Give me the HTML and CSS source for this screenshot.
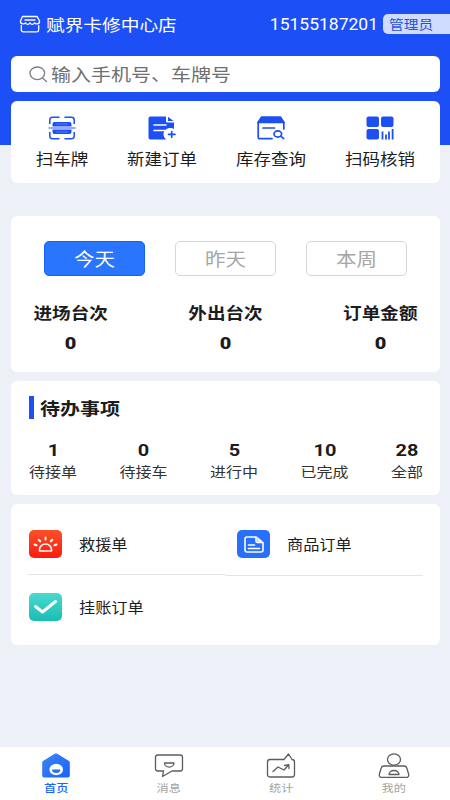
FILE: index.html
```html
<!DOCTYPE html>
<html lang="zh-CN">
<head>
<meta charset="utf-8">
<meta name="viewport" content="width=device-width, initial-scale=1">
<title>赋界卡修中心店</title>
<link rel="stylesheet" href="styles.css">
</head>
<body>
<div class="app">
  <header class="hero">
    <div class="topbar">
      <svg class="shop" width="22" height="18" viewBox="0 0 22 18" fill="none" stroke="#fff" stroke-width="1.3" stroke-linejoin="round" stroke-linecap="round"><path d="M3.800 1.500h13.400q1 0 1.500 1L20.500 6c.5 2.800-3.400 3.800-5 1.900-1.300 2-3.300 2-4.500 0-1.200 2-3.200 2-4.500 0C4.900 9.800 1 8.800 1.500 6L3 2.500q.3-1 .8-1zM6 5h10M2.300 10.500v4.500q0 1.800 1.800 1.800h13.800q1.800 0 1.800-1.800v-4.500"/></svg>
      <h1 class="shop-name"><span class="t">赋界卡修中心店</span></h1>
      <span class="phone">15155187201</span>
      <span class="role"><span class="t">管理员</span></span>
    </div>
    <div class="search">
      <svg width="19" height="17" viewBox="0 0 19 17" fill="none" stroke="#7c7f86" stroke-width="1.3" stroke-linecap="round"><ellipse cx="8.300" cy="7.300" rx="7.300" ry="6.300"/><path d="M13.500 12l4 3.500"/></svg>
      <span class="t">输入手机号、车牌号</span>
    </div>
  </header>

  <nav class="card actions">
    <a class="action">
      <svg width="28" height="24" viewBox="0 0 28 24" fill="none" stroke="#1d4ff4" stroke-width="1.500"><path d="M1.800 8V4q0-2.700 2.700-2.700h7M16.500 1.300h7q2.700 0 2.700 2.700v4M1.800 16v4q0 2.700 2.700 2.700h7M16.500 22.700h7q2.700 0 2.700-2.700v-4"/><path d="M.5 12h27" stroke="#6f8df8"/><path fill="#1d4ff4" stroke="none" d="M6.500 6h15q2 0 2 2v2.500h-19V8q0-2 2-2zM4.500 13.500h19V16q0 2-2 2h-15q-2 0-2-2z"/><path d="M8 8h12M8 16h12" stroke="#5b7df8" stroke-width="1"/></svg>
      <span class="t">扫车牌</span>
    </a>
    <a class="action">
      <svg class="new-order" width="28" height="24" viewBox="0 0 28 24"><path fill="#1d4ff4" d="M2.500.5H18V5q0 1.500 1.500 1.500H26V13a6.500 6 0 0 0-7.500 10.500h-16Q.5 23.500.5 21.500v-19q0-2 2-2zM20 .8L25.500 5H20z"/><path stroke="#fff" stroke-width="1.600" stroke-linecap="round" d="M6 9h12M6 14.500h11"/><path stroke="#1d4ff4" stroke-width="1.700" stroke-linecap="round" d="M20.500 18.300h6.500M23.700 15.500v5.700"/></svg>
      <span class="t">新建订单</span>
    </a>
    <a class="action">
      <svg width="28" height="24" viewBox="0 0 28 24" fill="none" stroke="#1d4ff4" stroke-width="1.700" stroke-linecap="round" stroke-linejoin="round"><path fill="#1d4ff4" d="M4.500 1.200h19L27 6.500H1z"/><path d="M1.200 6.500V21q0 1.700 1.700 1.700H15M26.800 6.500V13M6 12h11.500"/><ellipse cx="20.800" cy="18" rx="3.800" ry="3.100"/><path d="M23.700 20.200l3 2.500"/></svg>
      <span class="t">库存查询</span>
    </a>
    <a class="action">
      <svg width="28" height="24" viewBox="0 0 28 24" fill="#1d4ff4"><rect x=".5" y=".5" width="12.500" height="10.500" rx="2"/><rect x="15" y=".5" width="12.500" height="10.500" rx="2"/><rect x=".5" y="13" width="12.500" height="10.500" rx="2"/><path stroke="#1d4ff4" stroke-width="1.800" d="M16.500 15.500v8M20 18.500v5M23 15.500v8M26.600 13v10.500"/></svg>
      <span class="t">扫码核销</span>
    </a>
  </nav>

  <section class="card stats">
    <div class="periods">
      <button class="period active"><span class="t">今天</span></button>
      <button class="period"><span class="t">昨天</span></button>
      <button class="period"><span class="t">本周</span></button>
    </div>
    <div class="totals">
      <div class="total"><span class="t">进场台次</span><b class="num">0</b></div>
      <div class="total"><span class="t">外出台次</span><b class="num">0</b></div>
      <div class="total"><span class="t">订单金额</span><b class="num">0</b></div>
    </div>
  </section>

  <section class="card todo">
    <h2 class="todo-title"><span class="t">待办事项</span></h2>
    <div class="todo-row">
      <div class="todo-item"><b class="num">1</b><span class="t">待接单</span></div>
      <div class="todo-item"><b class="num">0</b><span class="t">待接车</span></div>
      <div class="todo-item"><b class="num">5</b><span class="t">进行中</span></div>
      <div class="todo-item"><b class="num">10</b><span class="t">已完成</span></div>
      <div class="todo-item"><b class="num">28</b><span class="t">全部</span></div>
    </div>
  </section>

  <section class="card links">
    <a class="link lined">
      <span class="tile red"><svg width="25" height="20" viewBox="0 0 25 20" fill="none" stroke="#fff" stroke-width="1.600" stroke-linecap="round"><path stroke-linejoin="round" d="M6.500 17v-1.500a6 5.500 0 0 1 12 0V17z"/><path d="M1.500 10.500l2 .8M5.700 5.800l1.500 1.500M12.500 3.500v2M19.300 5.800l-1.500 1.500M23.500 10.500l-2 .8" stroke-width="2"/></svg></span>
      <span class="t">救援单</span>
    </a>
    <a class="link lined second">
      <span class="tile blue"><svg width="20" height="17" viewBox="0 0 20 17" fill="none" stroke="#fff" stroke-width="1.600" stroke-linejoin="round" stroke-linecap="round"><path d="M12 1H3Q1 1 1 3v11q0 2 2 2h14q2 0 2-2V6.500h-5.500Q12 6.500 12 5z"/><path d="M13 1l5.500 4.500H14z" fill="#fff" stroke-width=".6"/><path d="M4.500 9h6M4.500 12.500h11"/></svg></span>
      <span class="t">商品订单</span>
    </a>
    <a class="link">
      <span class="tile teal"><svg width="25" height="16" viewBox="0 0 25 16" fill="none" stroke="#fff" stroke-width="3" stroke-linecap="round" stroke-linejoin="round"><path d="M2.500 7.500l7 5.500 13-10.500"/></svg></span>
      <span class="t">挂账订单</span>
    </a>
  </section>

  <footer class="tabbar">
    <a class="tab on">
      <svg width="30" height="25" viewBox="0 0 30 25"><defs><linearGradient id="home" x1="0" y1="0" x2="1" y2="1"><stop offset="0" stop-color="#3d85f8"/><stop offset="1" stop-color="#1a62f7"/></linearGradient></defs><path fill="url(#home)" d="M13.700.8q1.300-.8 2.600 0L28 8q.8.600.8 1.500v13q0 2-2 2H3.200q-2 0-2-2v-13Q1.200 8.600 2 8z"/><ellipse cx="15.200" cy="16.500" rx="6.800" ry="5.800" fill="#fff"/><path d="M11 16.500h8.400a4.200 3.400 0 0 1-8.400 0z" fill="#2a6df7"/></svg>
      <span class="t">首页</span>
    </a>
    <a class="tab">
      <svg width="30" height="25" viewBox="0 0 30 25" fill="none" stroke="#5c5c5c" stroke-width="1.300" stroke-linejoin="round"><path d="M3.800 2h22.400q2.300 0 2.300 2.300v11.400q0 2.300-2.300 2.300H18l-9.500 5.500 1-5.500H3.800q-2.300 0-2.300-2.300V4.300Q1.500 2 3.800 2z"/><path d="M10.500 10h9.500a4.700 4 0 0 1-9.500 0z"/></svg>
      <span class="t">消息</span>
    </a>
    <a class="tab">
      <svg width="30" height="25" viewBox="0 0 30 25" fill="none" stroke="#5c5c5c" stroke-width="1.300" stroke-linejoin="round" stroke-linecap="round"><path d="M4 6.500h14L22.500 1 26 6.500q2.500 0 2.500 2.500v12.500q0 2.500-2.500 2.500H4q-2.500 0-2.500-2.500V9Q1.500 6.500 4 6.500z"/><path d="M7 18.500l5-4.500 6 3 4.500-5M18.500 12.500l4.300-.8.200 3.800"/></svg>
      <span class="t">统计</span>
    </a>
    <a class="tab">
      <svg width="32" height="25" viewBox="0 0 32 25" fill="none" stroke="#5c5c5c" stroke-width="1.300" stroke-linejoin="round"><ellipse cx="16" cy="6.500" rx="6.500" ry="5.700"/><path d="M6 13h20q2.300 0 2.800 2l1.800 6q.6 3.500-2.600 3.500H4q-3.200 0-2.600-3.500l1.800-6q.5-2 2.800-2z"/><path d="M11 21.500h10a5 4 0 0 0-10 0z"/></svg>
      <span class="t">我的</span>
    </a>
  </footer>
</div>
</body>
</html>
```
FILE: styles.css
```css
* { box-sizing: border-box; }

body {
  margin: 0;
  background: #edf1f7;
  color: #1c1c1e;
  font-family: "Noto Sans CJK SC", sans-serif;
}

h1, h2 { margin: 0; font-weight: 400; }
svg { display: block; flex: none; }

/* Low, wide lettering used for every label */
.t {
  display: inline-block;
  white-space: nowrap;
  transform: scaleY(.88);
}

.num, .phone {
  font-family: Roboto, "Noto Sans CJK SC", sans-serif;
}

.app {
  width: 450px;
  height: 800px;
  display: flex;
  flex-direction: column;
}

.hero {
  flex: none;
  height: 145px;
  padding-top: 14px;
  background: #1d4ff7;
}

.topbar {
  display: flex;
  align-items: center;
  height: 20px;
  padding-left: 19px;
  color: #fff;
}

.shop-name {
  margin-left: 5px;
  font-size: 18.700px;
  line-height: 18px;
}

.phone {
  margin-left: auto;
  font-size: 17.5px;
  line-height: 20px;
  transform: scaleY(.93);
}

.role {
  width: 67px;
  height: 20px;
  margin-left: 5px;
  padding-left: 6px;
  border-radius: 5px 0 0 5px;
  background: #d0dcfd;
  color: #2751d9;
  font-size: 14.700px;
  line-height: 19px;
}

.search {
  display: flex;
  align-items: center;
  height: 36px;
  margin: 22px 10px 0 11px;
  padding-left: 18px;
  border-radius: 6px;
  background: #fff;
  color: #707070;
  font-size: 20px;
  line-height: 36px;
}
.search .t { margin-left: 3px; }

.card {
  flex: none;
  margin: 0 10px 0 11px;
  border-radius: 6px;
  background: #fff;
}

.actions {
  display: grid;
  grid-template-columns: 91px 109px 109px 109px;
  padding-left: 5.500px;
  height: 82px;
  margin-top: -44px;
  padding-top: 15px;
}
.action {
  display: flex;
  flex-direction: column;
  align-items: center;
  gap: 9px;
  font-size: 17.500px;
  line-height: 19px;
}

.stats {
  height: 156px;
  margin-top: 33px;
  padding-top: 25px;
}
.periods {
  display: flex;
  gap: 30px;
  padding-left: 33px;
}
.period {
  width: 101px;
  height: 35px;
  padding: 0;
  border: 1px solid #d6d6d6;
  border-radius: 5px;
  background: #fff;
  color: #a6a6a6;
  font: 20.500px/32px "Noto Sans CJK SC", sans-serif;
}
.period .t { padding-bottom: 2px; line-height: 30px; }
.period.active {
  border-color: #1563f5;
  background: #2a75fe;
  color: #fff;
}
.totals {
  display: flex;
  justify-content: space-between;
  padding: 26px 22.500px 0 22.500px;
}
.total {
  display: flex;
  flex-direction: column;
  align-items: center;
  gap: 12px;
  font-size: 18.600px;
  font-weight: 700;
  line-height: 20px;
}
.num {
  font-size: 19px;
  line-height: 20px;
  transform: scale(1.05, .88);
}

.todo {
  height: 114px;
  margin-top: 9px;
  padding: 15px 17px 0 18px;
}
.todo-title {
  height: 23px;
  padding-left: 6px;
  border-left: 5px solid #1d4ff7;
  font-size: 20px;
  font-weight: 700;
  line-height: 23px;
}
.todo-row {
  display: flex;
  justify-content: space-between;
  margin-top: 22px;
}
.todo-item {
  display: flex;
  flex-direction: column;
  align-items: center;
  color: #333;
  font-size: 16px;
  line-height: 20px;
}
.todo-item .num { color: #1c1c1e; }

.links {
  display: grid;
  grid-template: 72px 69px / 197px 198px;
  padding-left: 17px;
  margin-top: 9px;
}
.link {
  display: flex;
  align-items: flex-start;
  gap: 17px;
  padding-top: 17px;
  padding-left: 1px;
  font-size: 16.200px;
  line-height: 28px;
}
.link.lined {
  height: 71px;
  padding-top: 26px;
  border-bottom: 1px solid #e4e5e7;
}
.link.second {
  height: 72px;
  padding-left: 12px;
}
.tile {
  display: flex;
  align-items: center;
  justify-content: center;
  width: 33px;
  height: 28px;
  border-radius: 5px;
}
.red { background: linear-gradient(#fc5127, #fb1c10); }
.blue { background: #2870fc; }
.teal { background: linear-gradient(#48d9cf, #1bbdb3); }

.tabbar {
  flex: none;
  display: grid;
  grid-template-columns: repeat(4, 1fr);
  height: 53px;
  margin-top: auto;
  padding-top: 6px;
  background: #fff;
}
.tab {
  display: flex;
  flex-direction: column;
  align-items: center;
  gap: 2px;
  color: #a3a3a3;
  font-size: 12.200px;
  line-height: 16px;
}
.tab.on { color: #1a66f7; font-weight: 500; }
```
